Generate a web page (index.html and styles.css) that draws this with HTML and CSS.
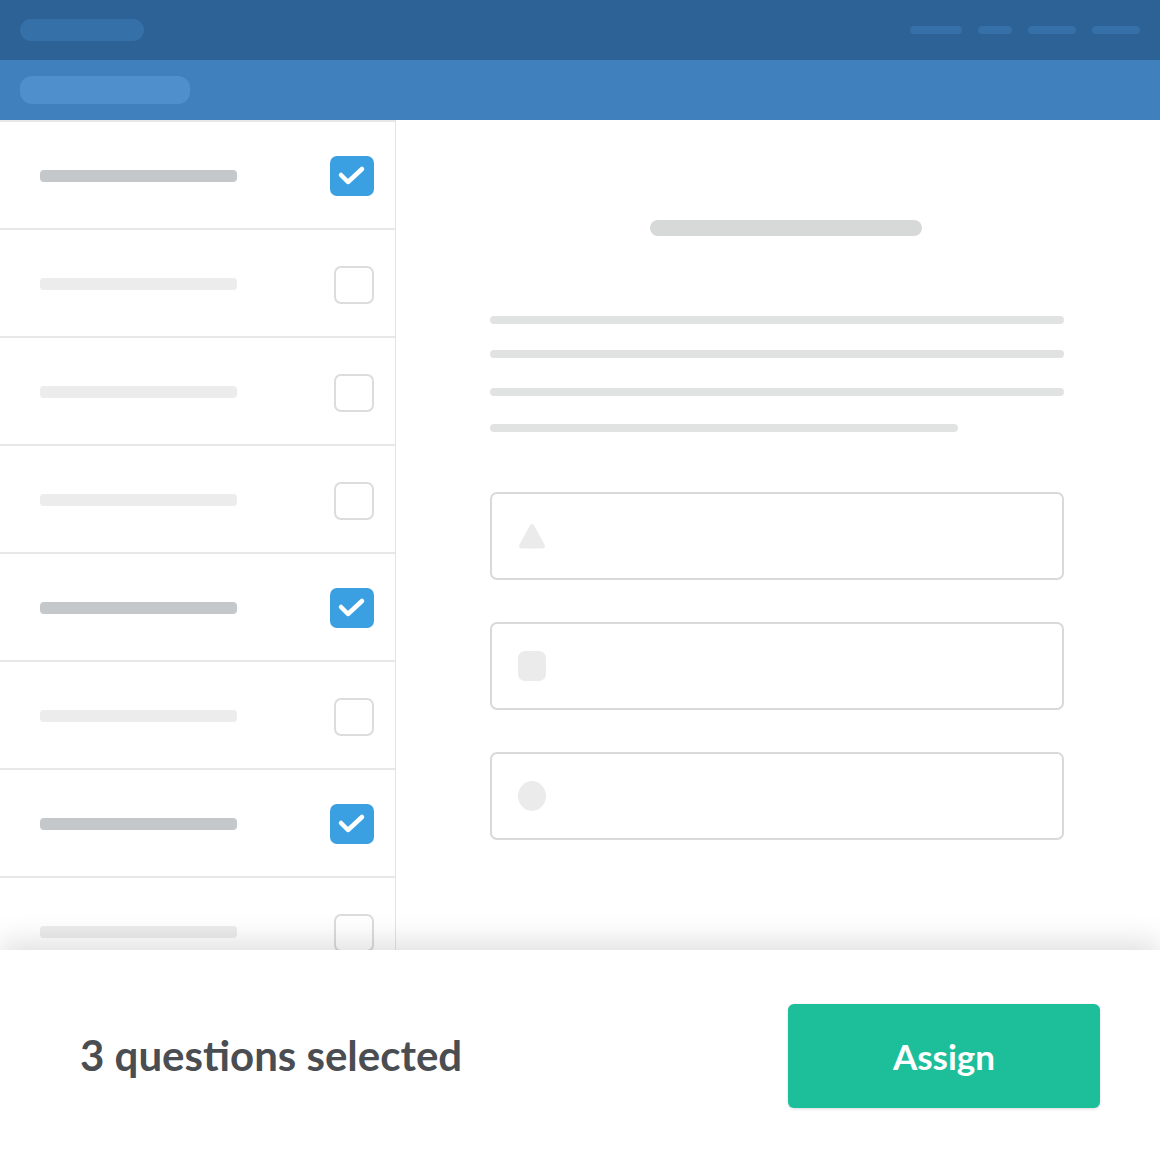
FILE: index.html
```html
<!DOCTYPE html>
<html>
<head>
<meta charset="utf-8">
<link rel="stylesheet" href="styles.css">
</head>
<body>
<div class="app">
  <header class="topbar">
    <div class="pill pill-logo"></div>
    <nav class="nav">
      <span class="nav-item w52"></span>
      <span class="nav-item w34"></span>
      <span class="nav-item w48"></span>
      <span class="nav-item w48"></span>
    </nav>
  </header>
  <div class="subbar">
    <div class="pill pill-sub"></div>
  </div>
  <main class="main">
    <aside class="list">
      <div class="row"><span class="bar dark"></span><span class="cb checked"><svg viewBox="0 0 44 40" width="44" height="40"><polyline points="11,19 18,26 32,13" fill="none" stroke="#fff" stroke-width="4.5" stroke-linecap="round" stroke-linejoin="round"/></svg></span></div>
      <div class="row"><span class="bar"></span><span class="cb"></span></div>
      <div class="row"><span class="bar"></span><span class="cb"></span></div>
      <div class="row"><span class="bar"></span><span class="cb"></span></div>
      <div class="row"><span class="bar dark"></span><span class="cb checked"><svg viewBox="0 0 44 40" width="44" height="40"><polyline points="11,19 18,26 32,13" fill="none" stroke="#fff" stroke-width="4.5" stroke-linecap="round" stroke-linejoin="round"/></svg></span></div>
      <div class="row"><span class="bar"></span><span class="cb"></span></div>
      <div class="row"><span class="bar dark"></span><span class="cb checked"><svg viewBox="0 0 44 40" width="44" height="40"><polyline points="11,19 18,26 32,13" fill="none" stroke="#fff" stroke-width="4.5" stroke-linecap="round" stroke-linejoin="round"/></svg></span></div>
      <div class="row"><span class="bar"></span><span class="cb"></span></div>
    </aside>
    <section class="detail">
      <div class="title"></div>
      <div class="lines">
        <div class="line"></div>
        <div class="line"></div>
        <div class="line"></div>
        <div class="line short"></div>
      </div>
      <div class="options">
        <div class="option"><svg class="icon" viewBox="0 0 28 28" width="28" height="28"><path d="M11.4 4.2 Q14 0 16.6 4.2 L26.5 22.5 Q28 26.5 24 26.5 L4 26.5 Q0 26.5 1.5 22.5 Z" fill="#ebebeb"/></svg></div>
        <div class="option"><span class="icon sq"></span></div>
        <div class="option"><span class="icon circ"></span></div>
      </div>
    </section>
  </main>
  <footer class="footer">
    <div class="count">3 questions selected</div>
    <button class="assign">Assign</button>
  </footer>
</div>
</body>
</html>
```

FILE: styles.css
```css
* { box-sizing: border-box; }
html, body { margin: 0; padding: 0; background: #fff; }
body { font-family: Lato, "Open Sans", sans-serif; }
.app { width: 1160px; height: 1160px; overflow: hidden; display: flex; flex-direction: column; }

.topbar {
  height: 60px; background: #2c6295;
  display: flex; align-items: center; justify-content: space-between;
  padding: 0 20px;
}
.pill { border-radius: 12px; }
.pill-logo { width: 124px; height: 22px; background: #3570a8; border-radius: 11px; }
.nav { display: flex; gap: 16px; }
.nav-item { display: block; height: 8px; background: #3570a8; border-radius: 4px; }
.w52 { width: 52px; }
.w34 { width: 34px; }
.w48 { width: 48px; }

.subbar {
  height: 60px; background: #3f80bd;
  display: flex; align-items: center; padding: 0 20px;
}
.pill-sub { width: 170px; height: 28px; background: #4f8fcc; border-radius: 12px; }

.main { height: 830px; display: flex; overflow: hidden; }
.list { width: 396px; flex: none; border-right: 1px solid #e4e4e4; }
.row {
  height: 108px; border-top: 2px solid #e8e8e8;
  display: flex; align-items: center; justify-content: space-between;
  padding: 2px 21px 0 40px;
}
.bar { display: block; width: 197px; height: 12px; border-radius: 4px; background: #ececec; }
.bar.dark { background: #c5c8cb; }
.cb {
  display: block; width: 40px; height: 38px; margin-top: 2px;
  border: 2px solid #dcdcdc; border-radius: 7px; background: #fff;
}
.cb.checked {
  width: 44px; height: 40px; border: none; background: #3aa0e1;
  border-radius: 7px; margin-top: 0;
}
.cb svg { display: block; }

.detail { flex: 1; padding: 100px 96px 0 94px; }
.title { width: 272px; height: 16px; border-radius: 8px; background: #d7d8d8; margin-left: 160px; }
.lines { margin-top: 80px; display: flex; flex-direction: column; }
.line { height: 8px; border-radius: 4px; background: #e1e2e2; width: 574px; }
.line:nth-child(2) { margin-top: 26px; }
.line:nth-child(3) { margin-top: 30px; }
.line:nth-child(4) { margin-top: 28px; }
.line.short { width: 468px; }

.options { margin-top: 60px; display: flex; flex-direction: column; gap: 42px; }
.option {
  width: 574px; height: 88px; border: 2px solid #d9d9d9; border-radius: 7px;
  display: flex; align-items: center; padding-left: 26px;
}
.icon { display: block; }
.sq { width: 28px; height: 30px; border-radius: 7px; background: #ebebeb; }
.circ { width: 28px; height: 30px; border-radius: 50%; background: #ebebeb; }

.footer {
  position: relative; z-index: 2;
  height: 210px; background: #fff;
  box-shadow: 0 -8px 28px rgba(0,0,0,0.13);
  display: flex; align-items: center; justify-content: space-between;
  padding: 0 60px 0 80px;
}
.count { font-size: 42px; font-weight: 700; color: #4a4d51; margin-top: 0; }
.assign {
  width: 312px; height: 104px; border: none; border-radius: 6px;
  background: #1dbf9b; color: #fff;
  font-family: Lato, "Open Sans", sans-serif; font-size: 35px; font-weight: 700;
  box-shadow: 0 1px 3px rgba(0,0,0,0.15);
  margin-top: 2px;
}
```
